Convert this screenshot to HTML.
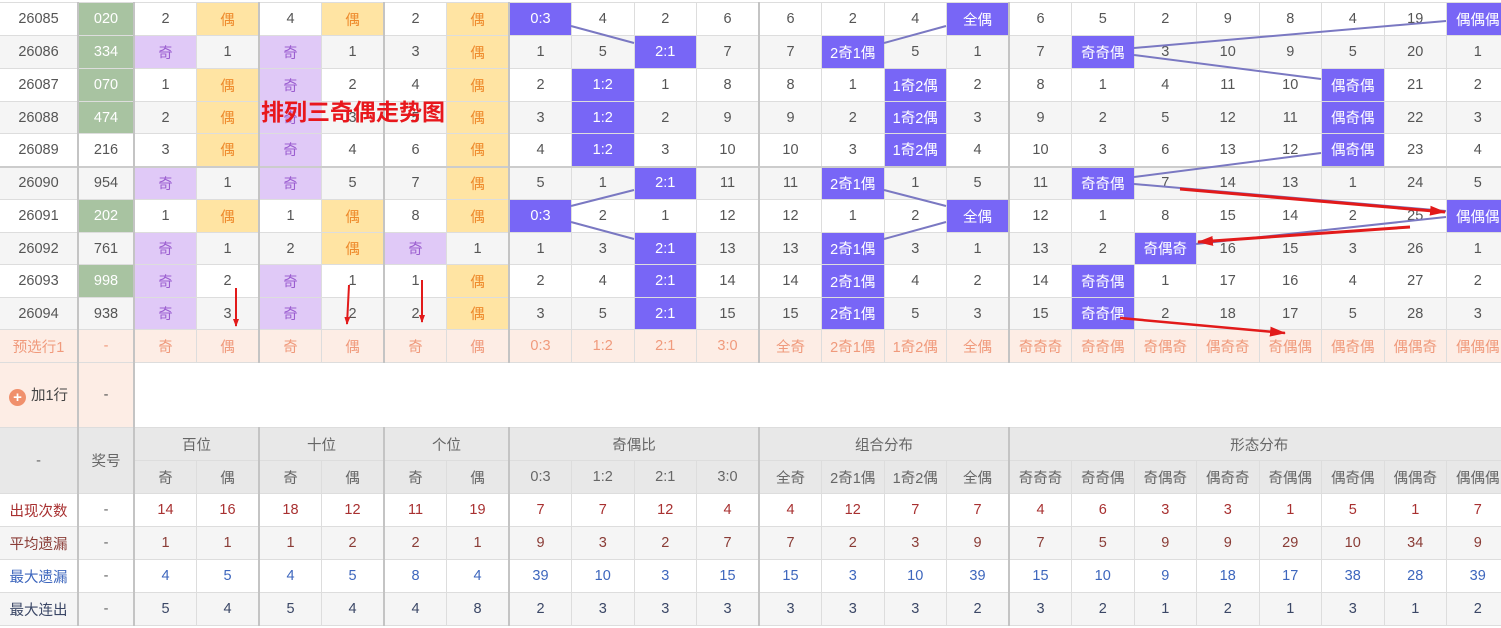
<!DOCTYPE html>
<html><head><meta charset="utf-8">
<style>
html,body{margin:0;padding:0;background:#fff;width:1501px;height:628px;overflow:hidden;position:relative}
table{position:absolute;left:0;top:2px;border-collapse:collapse;table-layout:fixed;width:1509px;font-family:"Liberation Sans","Noto Sans CJK SC",sans-serif;font-size:14.5px;color:#555}
td{border:1px solid #ddd;text-align:center;padding:0;white-space:nowrap;overflow:hidden}
tr td:first-child{border-left:none}
tr.d td:nth-child(2),tr.d td:nth-child(3),tr.d td:nth-child(5),tr.d td:nth-child(7),tr.d td:nth-child(9),tr.d td:nth-child(13),tr.d td:nth-child(17){border-left:2px solid #c4c4c4}
tr.e{background:#f5f5f5}
tr.t td{border-top:2px solid #ccc}
tr.r33{height:33px}tr.r32{height:32px}
.y{background:#ffe4a3;color:#ee8a2c}
.p{background:#e0c9f7;color:#9b5ed0}
.b{background:#7866f6;color:#fff}
.g{background:#a8c3a1;color:#fff}
tr.pre td{background:#fdede5;color:#f09a7c}
tr.h td{background:#e8e8e8;color:#666}
.L{border-left:2px solid #c4c4c4!important}
.c1 td{color:#a83030}.c2 td{color:#8a3c36}.c3 td{color:#3d66bd}.c4 td{color:#3b4766}
.c1 td:nth-child(2),.c2 td:nth-child(2),.c3 td:nth-child(2),.c4 td:nth-child(2){color:#666}
svg{position:absolute;left:0;top:0}
.title{position:absolute;left:261px;top:93px;font:bold 23px "Liberation Sans","Noto Sans CJK SC",sans-serif;color:#e8171c;letter-spacing:0}
.plus{display:inline-block;width:17px;height:17px;border-radius:50%;background:#f0906c;color:#fff;font-size:15px;line-height:17px;vertical-align:-2px;margin-right:5px;font-weight:bold}
</style></head><body>
<table>
<colgroup><col style="width:78px"><col style="width:56px"><col span="22" style="width:62.5px"></colgroup>
<tr class="d r33"><td>26085</td><td class="g">020</td><td>2</td><td class="y">偶</td><td>4</td><td class="y">偶</td><td>2</td><td class="y">偶</td><td class="b">0:3</td><td>4</td><td>2</td><td>6</td><td>6</td><td>2</td><td>4</td><td class="b">全偶</td><td>6</td><td>5</td><td>2</td><td>9</td><td>8</td><td>4</td><td>19</td><td class="b">偶偶偶</td></tr>
<tr class="d e r33"><td>26086</td><td class="g">334</td><td class="p">奇</td><td>1</td><td class="p">奇</td><td>1</td><td>3</td><td class="y">偶</td><td>1</td><td>5</td><td class="b">2:1</td><td>7</td><td>7</td><td class="b">2奇1偶</td><td>5</td><td>1</td><td>7</td><td class="b">奇奇偶</td><td>3</td><td>10</td><td>9</td><td>5</td><td>20</td><td>1</td></tr>
<tr class="d r33"><td>26087</td><td class="g">070</td><td>1</td><td class="y">偶</td><td class="p">奇</td><td>2</td><td>4</td><td class="y">偶</td><td>2</td><td class="b">1:2</td><td>1</td><td>8</td><td>8</td><td>1</td><td class="b">1奇2偶</td><td>2</td><td>8</td><td>1</td><td>4</td><td>11</td><td>10</td><td class="b">偶奇偶</td><td>21</td><td>2</td></tr>
<tr class="d e r32"><td>26088</td><td class="g">474</td><td>2</td><td class="y">偶</td><td class="p">奇</td><td>3</td><td>5</td><td class="y">偶</td><td>3</td><td class="b">1:2</td><td>2</td><td>9</td><td>9</td><td>2</td><td class="b">1奇2偶</td><td>3</td><td>9</td><td>2</td><td>5</td><td>12</td><td>11</td><td class="b">偶奇偶</td><td>22</td><td>3</td></tr>
<tr class="d r33"><td>26089</td><td>216</td><td>3</td><td class="y">偶</td><td class="p">奇</td><td>4</td><td>6</td><td class="y">偶</td><td>4</td><td class="b">1:2</td><td>3</td><td>10</td><td>10</td><td>3</td><td class="b">1奇2偶</td><td>4</td><td>10</td><td>3</td><td>6</td><td>13</td><td>12</td><td class="b">偶奇偶</td><td>23</td><td>4</td></tr>
<tr class="d e t r33"><td>26090</td><td>954</td><td class="p">奇</td><td>1</td><td class="p">奇</td><td>5</td><td>7</td><td class="y">偶</td><td>5</td><td>1</td><td class="b">2:1</td><td>11</td><td>11</td><td class="b">2奇1偶</td><td>1</td><td>5</td><td>11</td><td class="b">奇奇偶</td><td>7</td><td>14</td><td>13</td><td>1</td><td>24</td><td>5</td></tr>
<tr class="d r33"><td>26091</td><td class="g">202</td><td>1</td><td class="y">偶</td><td>1</td><td class="y">偶</td><td>8</td><td class="y">偶</td><td class="b">0:3</td><td>2</td><td>1</td><td>12</td><td>12</td><td>1</td><td>2</td><td class="b">全偶</td><td>12</td><td>1</td><td>8</td><td>15</td><td>14</td><td>2</td><td>25</td><td class="b">偶偶偶</td></tr>
<tr class="d e r32"><td>26092</td><td>761</td><td class="p">奇</td><td>1</td><td>2</td><td class="y">偶</td><td class="p">奇</td><td>1</td><td>1</td><td>3</td><td class="b">2:1</td><td>13</td><td>13</td><td class="b">2奇1偶</td><td>3</td><td>1</td><td>13</td><td>2</td><td class="b">奇偶奇</td><td>16</td><td>15</td><td>3</td><td>26</td><td>1</td></tr>
<tr class="d r33"><td>26093</td><td class="g">998</td><td class="p">奇</td><td>2</td><td class="p">奇</td><td>1</td><td>1</td><td class="y">偶</td><td>2</td><td>4</td><td class="b">2:1</td><td>14</td><td>14</td><td class="b">2奇1偶</td><td>4</td><td>2</td><td>14</td><td class="b">奇奇偶</td><td>1</td><td>17</td><td>16</td><td>4</td><td>27</td><td>2</td></tr>
<tr class="d e r32"><td>26094</td><td>938</td><td class="p">奇</td><td>3</td><td class="p">奇</td><td>2</td><td>2</td><td class="y">偶</td><td>3</td><td>5</td><td class="b">2:1</td><td>15</td><td>15</td><td class="b">2奇1偶</td><td>5</td><td>3</td><td>15</td><td class="b">奇奇偶</td><td>2</td><td>18</td><td>17</td><td>5</td><td>28</td><td>3</td></tr>
<tr class="d pre r33"><td>预选行1</td><td>-</td><td>奇</td><td>偶</td><td>奇</td><td>偶</td><td>奇</td><td>偶</td><td>0:3</td><td>1:2</td><td>2:1</td><td>3:0</td><td>全奇</td><td>2奇1偶</td><td>1奇2偶</td><td>全偶</td><td>奇奇奇</td><td>奇奇偶</td><td>奇偶奇</td><td>偶奇奇</td><td>奇偶偶</td><td>偶奇偶</td><td>偶偶奇</td><td>偶偶偶</td></tr>
<tr style="height:65px"><td style="background:#fdede5;color:#444"><span class="plus">+</span>加1行</td><td class="L" style="background:#fdede5">-</td><td class="L" colspan="22" style="background:#fff"></td></tr>
<tr class="h" style="height:33px"><td rowspan="2">-</td><td rowspan="2" class="L">奖号</td><td colspan="2" class="L">百位</td><td colspan="2" class="L">十位</td><td colspan="2" class="L">个位</td><td colspan="4" class="L">奇偶比</td><td colspan="4" class="L">组合分布</td><td colspan="8" class="L">形态分布</td></tr>
<tr class="h" style="height:33px"><td class="L">奇</td><td>偶</td><td class="L">奇</td><td>偶</td><td class="L">奇</td><td>偶</td><td class="L">0:3</td><td>1:2</td><td>2:1</td><td>3:0</td><td class="L">全奇</td><td>2奇1偶</td><td>1奇2偶</td><td>全偶</td><td class="L">奇奇奇</td><td>奇奇偶</td><td>奇偶奇</td><td>偶奇奇</td><td>奇偶偶</td><td>偶奇偶</td><td>偶偶奇</td><td>偶偶偶</td></tr>
<tr class="d c1 r33"><td>出现次数</td><td>-</td><td>14</td><td>16</td><td>18</td><td>12</td><td>11</td><td>19</td><td>7</td><td>7</td><td>12</td><td>4</td><td>4</td><td>12</td><td>7</td><td>7</td><td>4</td><td>6</td><td>3</td><td>3</td><td>1</td><td>5</td><td>1</td><td>7</td></tr>
<tr class="d e c2 r33"><td>平均遗漏</td><td>-</td><td>1</td><td>1</td><td>1</td><td>2</td><td>2</td><td>1</td><td>9</td><td>3</td><td>2</td><td>7</td><td>7</td><td>2</td><td>3</td><td>9</td><td>7</td><td>5</td><td>9</td><td>9</td><td>29</td><td>10</td><td>34</td><td>9</td></tr>
<tr class="d c3 r33"><td>最大遗漏</td><td>-</td><td>4</td><td>5</td><td>4</td><td>5</td><td>8</td><td>4</td><td>39</td><td>10</td><td>3</td><td>15</td><td>15</td><td>3</td><td>10</td><td>39</td><td>15</td><td>10</td><td>9</td><td>18</td><td>17</td><td>38</td><td>28</td><td>39</td></tr>
<tr class="d e c4 r33"><td>最大连出</td><td>-</td><td>5</td><td>4</td><td>5</td><td>4</td><td>4</td><td>8</td><td>2</td><td>3</td><td>3</td><td>3</td><td>3</td><td>3</td><td>3</td><td>2</td><td>3</td><td>2</td><td>1</td><td>2</td><td>1</td><td>3</td><td>1</td><td>2</td></tr>
</table>
<svg width="1501" height="628">
<defs><marker id="ah" markerWidth="8" markerHeight="6" refX="7" refY="3" orient="auto" markerUnits="userSpaceOnUse"><path d="M0,0 L8,3 L0,6 z" fill="#e21a1a"/></marker>
<marker id="ah2" markerWidth="16" markerHeight="10" refX="15" refY="5" orient="auto" markerUnits="userSpaceOnUse"><path d="M0,0 L16,5 L0,10 z" fill="#e21a1a"/></marker></defs>
<g stroke="#7a78c2" stroke-width="2" fill="none">
<line x1="571" y1="26" x2="634" y2="43"/>
<line x1="634" y1="190" x2="571" y2="206"/>
<line x1="571" y1="222" x2="634" y2="239"/>
<line x1="946" y1="26" x2="884" y2="43"/>
<line x1="884" y1="190" x2="946" y2="206"/>
<line x1="946" y1="222" x2="884" y2="239"/>
<line x1="1446" y1="21" x2="1134" y2="48"/>
<line x1="1134" y1="55" x2="1321" y2="79"/>
<line x1="1321" y1="153" x2="1134" y2="177"/>
<line x1="1134" y1="184" x2="1446" y2="211"/>
<line x1="1446" y1="217" x2="1196" y2="244"/>
</g>
<g stroke="#e21a1a" stroke-width="2" fill="none">
<line x1="236" y1="288" x2="236" y2="326" marker-end="url(#ah)"/>
<line x1="349" y1="285" x2="347" y2="324" marker-end="url(#ah)"/>
<line x1="422" y1="280" x2="422" y2="322" marker-end="url(#ah)"/>
<line x1="1180" y1="189" x2="1445" y2="212" stroke-width="3" marker-end="url(#ah2)"/>
<line x1="1410" y1="227" x2="1198" y2="242" stroke-width="3" marker-end="url(#ah2)"/>
<line x1="1120" y1="318" x2="1285" y2="333" stroke-width="2.5" marker-end="url(#ah2)"/>
</g>
</svg>
<div class="title">排列三奇偶走势图</div>
</body></html>
